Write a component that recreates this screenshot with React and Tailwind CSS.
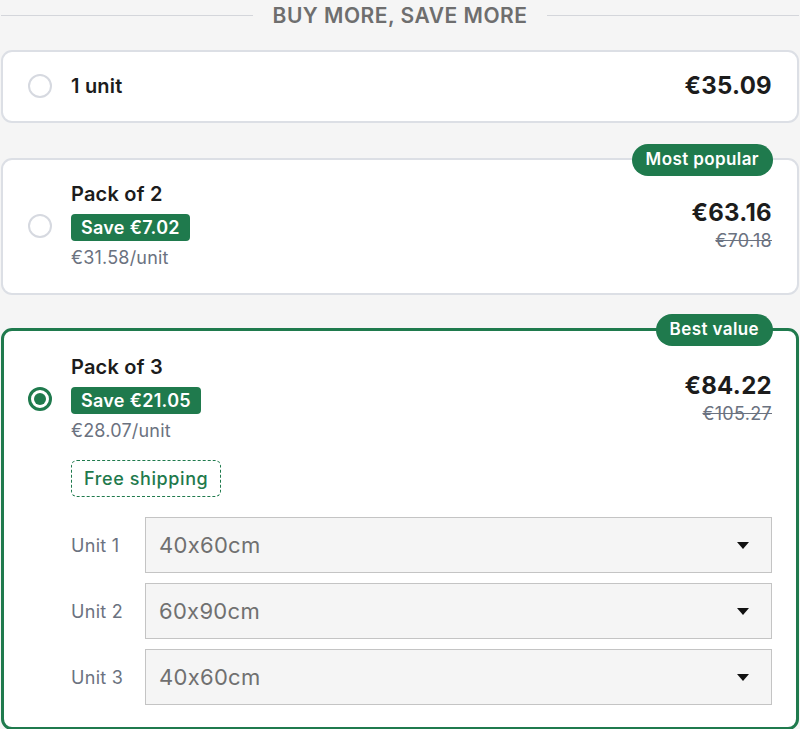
import React, { useState } from "react";

const GREEN = "bg-[#1f7a4d]";

const packs = [
  { id: 1, title: "1 unit", price: "€35.09" },
  {
    id: 2,
    title: "Pack of 2",
    save: "Save €7.02",
    perUnit: "€31.58/unit",
    price: "€63.16",
    old: "€70.18",
    badge: "Most popular",
  },
  {
    id: 3,
    title: "Pack of 3",
    save: "Save €21.05",
    perUnit: "€28.07/unit",
    price: "€84.22",
    old: "€105.27",
    badge: "Best value",
    freeShipping: true,
    units: ["40x60cm", "60x90cm", "40x60cm"],
  },
];

const Radio = ({ checked }) =>
  checked ? (
    <div className="w-6 h-6 rounded-full border-[3px] border-[#1f7a4d] flex items-center justify-center shrink-0">
      <div className="w-[12px] h-[12px] rounded-full bg-[#1f7a4d]" />
    </div>
  ) : (
    <div className="w-6 h-6 rounded-full border-2 border-[#d6d9e0] bg-white shrink-0" />
  );

const UnitSelect = ({ label, value }) => (
  <div className="flex items-center">
    <span className="w-[74px] text-[18px] tracking-[0.3px] text-[#6b7280]">{label}</span>
    <div className="flex-1 h-[56px] bg-[#f5f5f5] border border-[#c4c4c4] flex items-center justify-between pl-[13px] pr-[22px]">
      <span className="text-[22px] tracking-[0.3px] text-[#707070]">{value}</span>
      <svg width="12" height="7" viewBox="0 0 12 7">
        <path d="M0 0 L12 0 L6 7 Z" fill="#111" />
      </svg>
    </div>
  </div>
);

const PackCard = ({ pack, selected, onSelect }) => (
  <div
    onClick={onSelect}
    className={`relative rounded-[11px] bg-white cursor-pointer ${
      selected
        ? "border-[3px] border-[#1f7a4d] pl-[24px] pr-[24px] pt-[22px] pb-[22px]"
        : pack.save
        ? "border-2 border-[#dcdfe5] pl-[25px] pr-[25px] pt-[20px] pb-[22px]"
        : "border-2 border-[#dcdfe5] pl-[25px] pr-[25px] pt-[19px] pb-[20px]"
    }`}
  >
    {pack.badge && (
      <span
        className={`absolute ${selected ? "-top-[17px] right-[23px]" : "-top-[16px] right-[24px]"} ${GREEN} text-white text-[17px] tracking-[0.4px] font-semibold rounded-full px-[14px] h-[32px] flex items-center`}
      >
        {pack.badge}
      </span>
    )}
    <div className="flex items-center">
      <Radio checked={selected} />
      <div className="flex-1 ml-[19px] flex flex-col items-start">
        <span className="text-[20px] leading-[28px] tracking-[0.2px] font-semibold text-[#1c1c1c]">{pack.title}</span>
        {pack.save && (
          <>
            <span className={`${GREEN} mt-[6px] text-white text-[18px] tracking-[0.3px] font-semibold rounded-[4px] px-[10px] h-[27px] flex items-center`}>
              {pack.save}
            </span>
            <span className="mt-[4px] text-[18px] leading-[26px] tracking-[0.2px] text-[#6b7280]">{pack.perUnit}</span>
          </>
        )}
      </div>
      <div className="flex flex-col items-end">
        <span className="text-[24px] leading-[30px] tracking-[0.3px] font-bold text-[#1c1c1c]">{pack.price}</span>
        {pack.old && (
          <span className="text-[18px] leading-[26px] tracking-[0.3px] text-[#6b7280] line-through">{pack.old}</span>
        )}
      </div>
    </div>
    {pack.freeShipping && (
      <div className="ml-[43px] mt-[16px]">
        <span className="inline-flex items-center h-[37px] px-[12px] rounded-[6px] border-[1.5px] border-dashed border-[#1f7a4d] text-[#1f7a4d] text-[18px] tracking-[0.6px] font-medium">
          Free shipping
        </span>
      </div>
    )}
    {pack.units && (
      <div className="ml-[43px] mt-[20px] flex flex-col gap-[10px]">
        {pack.units.map((u, i) => (
          <UnitSelect key={i} label={`Unit ${i + 1}`} value={u} />
        ))}
      </div>
    )}
  </div>
);

export default function App() {
  const [selected, setSelected] = useState(3);
  return (
    <div
      className="min-h-screen bg-[#f5f5f5] px-[1px] [font-feature-settings:'calt'_0]"
      style={{ fontFamily: "Inter, 'Noto Sans', sans-serif" }}
    >
      <div className="flex items-center h-[31px] gap-[20px]">
        <div className="flex-1 h-px bg-[#d4d6db]" />
        <h2 className="text-[21px] font-semibold text-[#6e6e6e] tracking-[0.5px]">BUY MORE, SAVE MORE</h2>
        <div className="flex-1 h-px bg-[#d4d6db]" />
      </div>
      <div className="mt-[19px] flex flex-col">
        {packs.map((p, i) => (
          <div key={p.id} className={i === 0 ? "" : i === 1 ? "mt-[35px]" : "mt-[33px]"}>
            <PackCard pack={p} selected={selected === p.id} onSelect={() => setSelected(p.id)} />
          </div>
        ))}
      </div>
    </div>
  );
}
